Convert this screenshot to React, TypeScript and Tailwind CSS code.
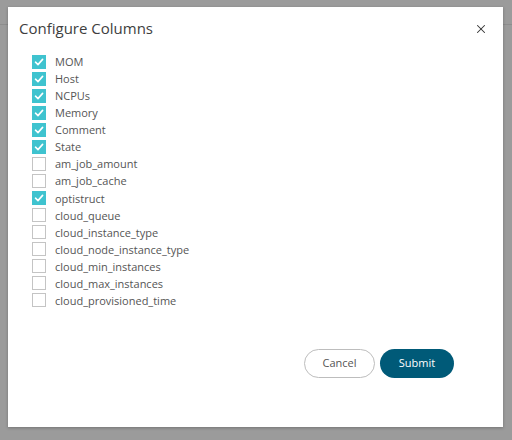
import { X } from "lucide-react";

const columns = [
  { name: "MOM", on: true },
  { name: "Host", on: true },
  { name: "NCPUs", on: true },
  { name: "Memory", on: true },
  { name: "Comment", on: true },
  { name: "State", on: true },
  { name: "am_job_amount", on: false },
  { name: "am_job_cache", on: false },
  { name: "optistruct", on: true },
  { name: "cloud_queue", on: false },
  { name: "cloud_instance_type", on: false },
  { name: "cloud_node_instance_type", on: false },
  { name: "cloud_min_instances", on: false },
  { name: "cloud_max_instances", on: false },
  { name: "cloud_provisioned_time", on: false },
];

const Check = ({ on }: { on: boolean }) =>
  on ? (
    <span className="w-[14px] h-[14px] bg-[#3fc3cf] flex items-center justify-center">
      <svg width="10" height="10" viewBox="0 0 10 10" fill="none">
        <path d="M1.5 5.2 L4 7.6 L8.6 2.4" stroke="white" strokeWidth="1.6" strokeLinecap="round" strokeLinejoin="round" />
      </svg>
    </span>
  ) : (
    <span className="w-[14px] h-[14px] border border-[#c4c4c4] bg-white" />
  );

export default function App() {
  return (
    <div
      className="relative w-[512px] h-[440px] bg-[#9b9b9b] overflow-hidden pt-[7px] pl-[8px]"
      style={{ fontFamily: '"Open Sans", "Noto Sans", sans-serif' }}
    >
      {/* faint page behind the overlay */}
      <div className="absolute left-0 top-[24px] w-[8px] h-px bg-[#8d8d8d]" />
      <div className="absolute right-0 top-[24px] w-[9px] h-px bg-[#8d8d8d]" />

      <div className="relative w-[495px] h-[420px] bg-white flex flex-col shadow-[0_1px_3px_rgba(0,0,0,0.25)]">
        <div className="flex items-center justify-between pl-[11px] pr-[15px] pt-[5px] h-[37px]">
          <span className="text-[15px] leading-[22px] text-[#3e3e3e]">Configure Columns</span>
          <X size={14} strokeWidth={1.8} className="text-[#333] mt-[2px]" />
        </div>

        <ul className="flex flex-col pl-[24px] mt-[9px]">
          {columns.map((c) => (
            <li key={c.name} className="flex items-center h-[17.07px] gap-[9px]">
              <Check on={c.on} />
              <span className="text-[11px] leading-none text-[#555]">{c.name}</span>
            </li>
          ))}
        </ul>

        <div className="flex justify-end gap-[5px] pr-[49px] mt-[40px]">
          <button className="w-[71px] h-[29px] rounded-full border border-[#bdbdbd] bg-white text-[11px] text-[#555]">
            Cancel
          </button>
          <button className="w-[74px] h-[29px] rounded-full bg-[#005a78] text-[11px] text-white">
            Submit
          </button>
        </div>
      </div>
    </div>
  );
}
